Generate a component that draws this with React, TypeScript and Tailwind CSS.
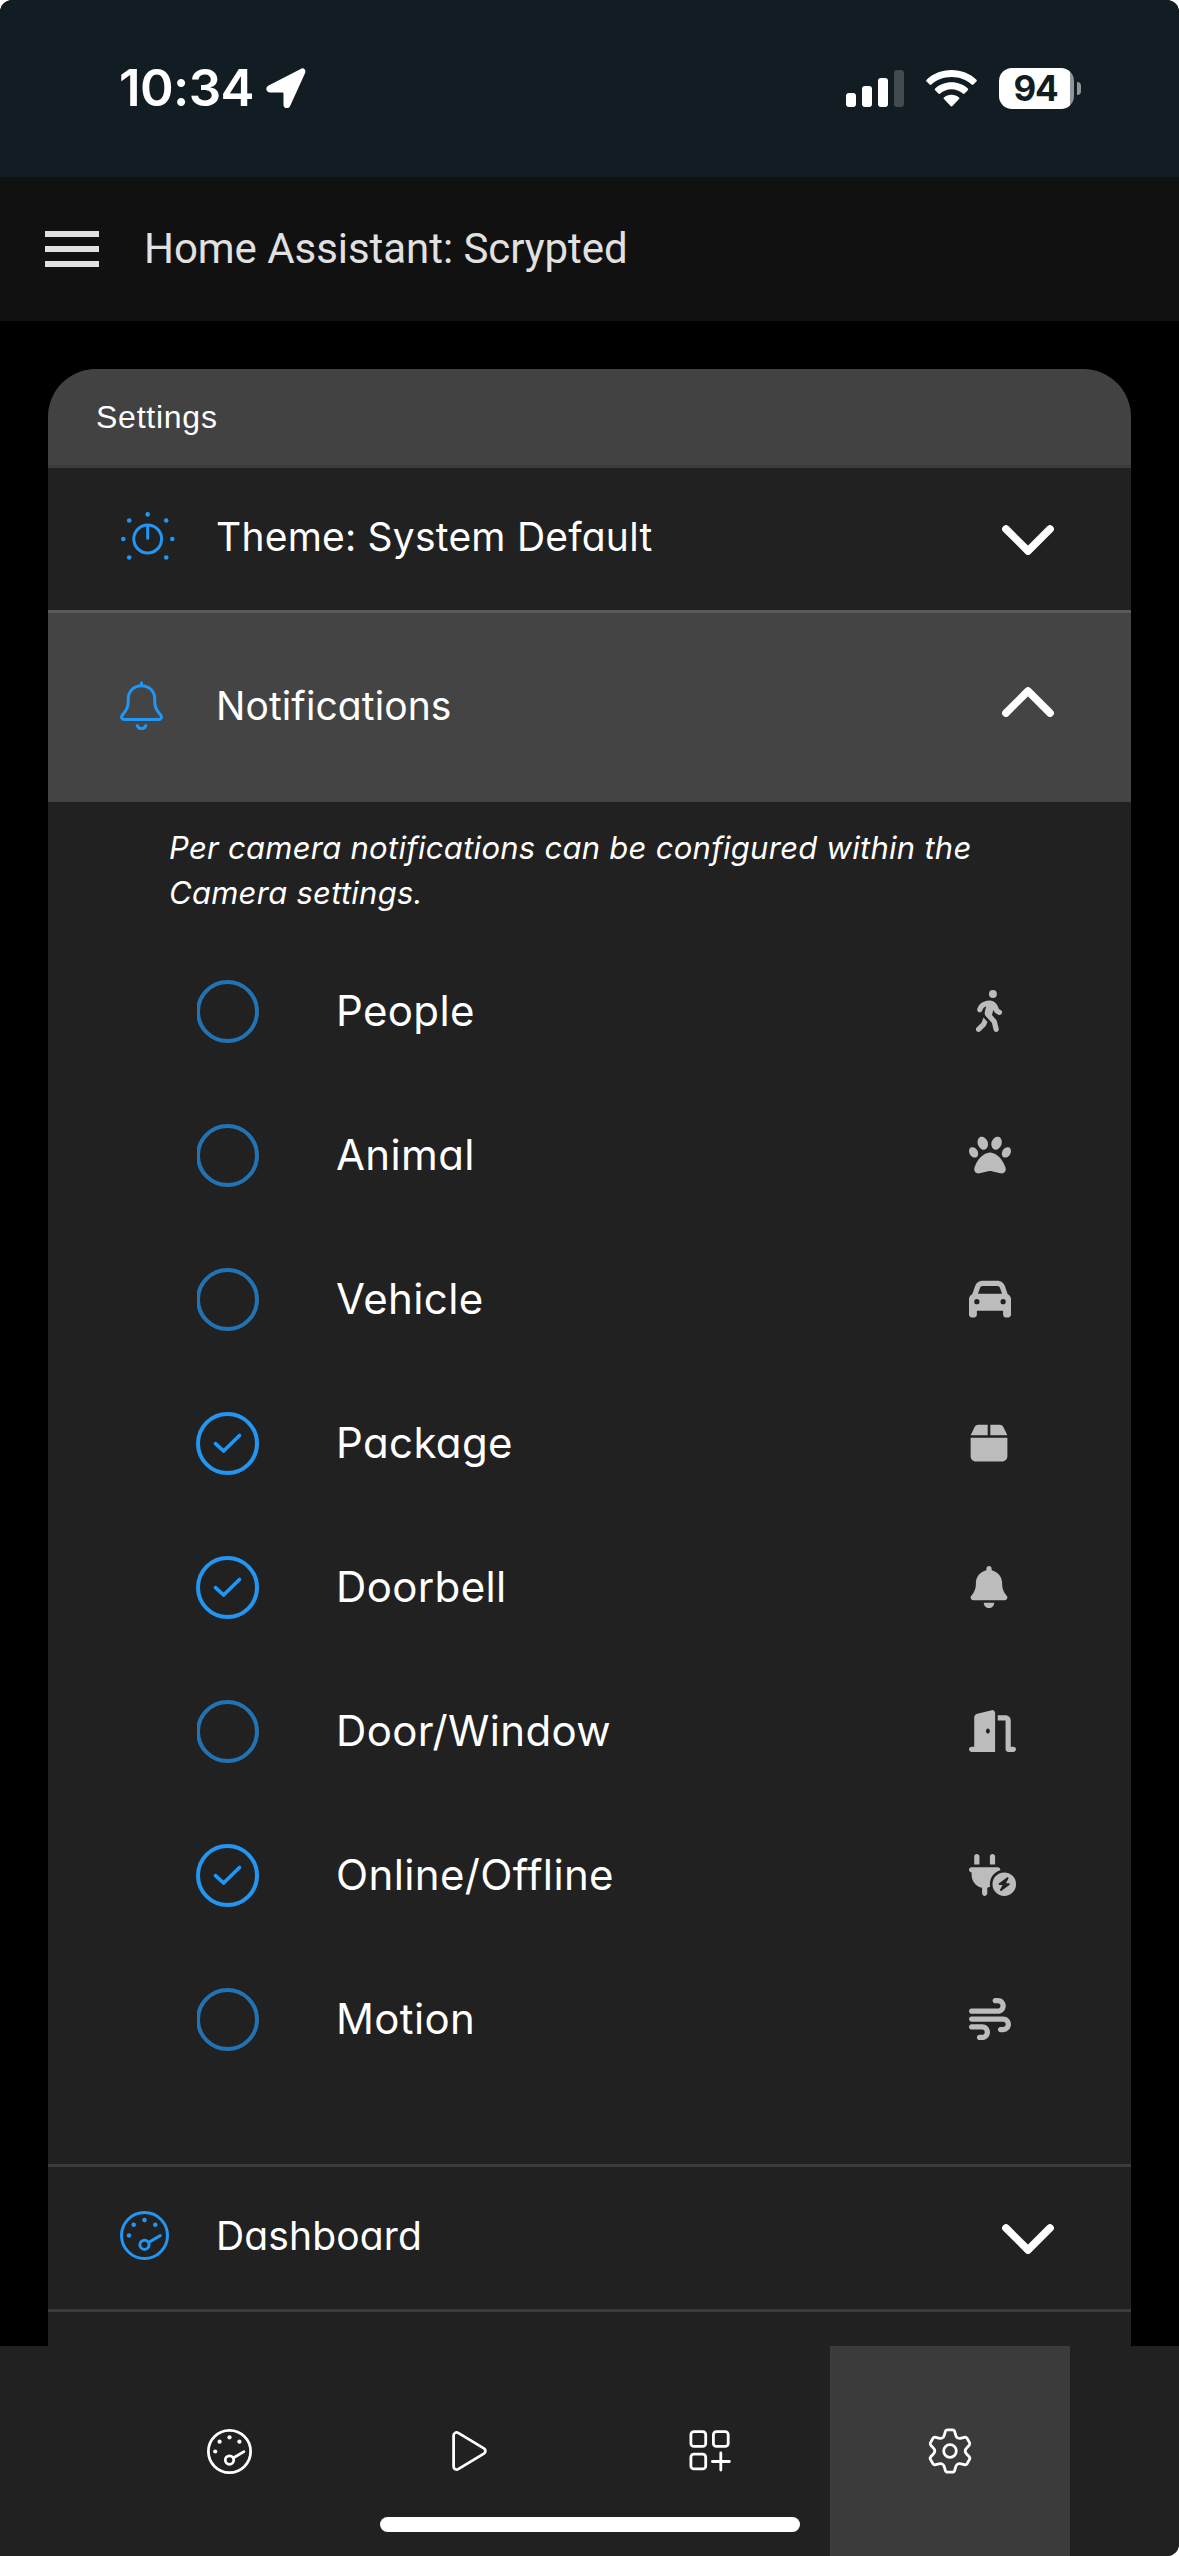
import type { ReactNode } from "react";
import type { IconType } from "react-icons";
import {
  FaBell,
  FaBox,
  FaCar,
  FaDoorOpen,
  FaPaw,
  FaPersonWalking,
  FaPlugCircleBolt,
  FaWind,
} from "react-icons/fa6";

type Option = { label: string; checked: boolean; icon: IconType; iconClass: string };

const options: Option[] = [
  { label: "People", checked: false, icon: FaPersonWalking, iconClass: "mr-[2px]" },
  { label: "Animal", checked: false, icon: FaPaw, iconClass: "" },
  { label: "Vehicle", checked: false, icon: FaCar, iconClass: "" },
  { label: "Package", checked: true, icon: FaBox, iconClass: "mr-[2px]" },
  { label: "Doorbell", checked: true, icon: FaBell, iconClass: "mr-[2px]" },
  { label: "Door/Window", checked: false, icon: FaDoorOpen, iconClass: "ml-[5px] w-[47px]" },
  { label: "Online/Offline", checked: true, icon: FaPlugCircleBolt, iconClass: "ml-[5px] w-[47px]" },
  { label: "Motion", checked: false, icon: FaWind, iconClass: "" },
];

function StatusBar() {
  return (
    <div className="flex h-[177px] shrink-0 items-start justify-between rounded-t-[12px] bg-[#111d23] pt-[58px] pr-[98px] pl-[119px] text-white">
      <div className="flex h-[60px] items-center">
        <span className="text-[51px] leading-[60px] font-semibold tracking-[-0.6px]">10:34</span>
        <svg className="ml-[12px] h-[40px] w-[40px]" viewBox="0 0 40 40" fill="currentColor">
          <path d="M35.2.7 2.6 17.6C-.9 19.4-.1 24.4 3.8 24.4H16.2c.9 0 1.3.4 1.3 1.3v11c0 4.2 5 4.8 6.6 1.3L39 5.2C40.3 2.100 38-.6 35.200.7Z" />
        </svg>
      </div>
      <div className="flex h-[60px] items-center">
        <div className="flex h-[37px] items-end gap-[6px]">
          <span className="h-[14px] w-[10px] rounded-[3px] bg-white" />
          <span className="h-[21px] w-[10px] rounded-[3px] bg-white" />
          <span className="h-[29px] w-[10px] rounded-[3px] bg-white" />
          <span className="h-[37px] w-[10px] rounded-[3px] bg-[#414b50]" />
        </div>
        <svg className="ml-[22px] h-[37px] w-[51px]" viewBox="0 0 51 37" fill="currentColor">
          <path d="M25.500 0C15.800 0 7 3.600.6 9.700c-.6.600-.6 1.300 0 1.900l3 3c.600.600 1.200.600 1.800 0C10.700 9.700 17.700 7 25.500 7s14.800 2.700 20.100 7.600c.6.600 1.200.600 1.800 0l3-3c.6-.6.6-1.300 0-1.900C44 3.600 35.200 0 25.500 0Z" />
          <path d="M25.500 12.300c-6.300 0-12 2.300-16.300 6.200-.6.600-.6 1.200 0 1.800l3.200 3.200c.6.600 1.200.600 1.800 0 3-2.600 6.900-4.200 11.300-4.200s8.300 1.600 11.300 4.200c.6.600 1.200.6 1.800 0l3.200-3.200c.6-.6.6-1.200 0-1.800-4.300-3.900-10-6.200-16.300-6.200Z" />
          <path d="M25.500 24.700c-2.900 0-5.500 1-7.500 2.700-.6.500-.6 1.200 0 1.700l6.600 7c.6.600 1.200.6 1.800 0l6.600-7c.6-.5.600-1.200 0-1.700-2-1.700-4.600-2.700-7.500-2.700Z" />
        </svg>
        <div className="ml-[22px] flex h-[41px] w-[75px] items-center justify-center rounded-[13px] bg-[linear-gradient(to_right,white_71px,#8f9598_71px)] pr-[2px]">
          <span className="text-[35px] leading-[41px] font-bold tracking-[-1.2px] text-[#111d23]">94</span>
        </div>
        <span className="ml-[3px] h-[13px] w-[4px] rounded-r-full bg-[#8f9598]" />
      </div>
    </div>
  );
}

function Chevron({ up = false }: { up?: boolean }) {
  return (
    <svg
      className={up ? "h-[30px] w-[52px] rotate-180" : "h-[30px] w-[52px]"}
      viewBox="0 0 52 30"
      fill="none"
      stroke="currentColor"
      strokeWidth="7.6"
      strokeLinecap="round"
      strokeLinejoin="round"
    >
      <path d="M4 4 26 26 48 4" />
    </svg>
  );
}

function DialIcon() {
  return (
    <svg className="ml-px h-[54px] w-[54px]" viewBox="0 0 54 54" fill="none">
      <circle cx="26.700" cy="27" r="13.900" stroke="currentColor" strokeWidth="3" />
      <path d="M26.700 14v12.300" stroke="currentColor" strokeWidth="3" strokeLinecap="round" />
      <g fill="currentColor">
        <circle cx="26.700" cy="2.400" r="2.300" />
        <circle cx="8.200" cy="8.500" r="2.300" />
        <circle cx="45.200" cy="8.500" r="2.300" />
        <circle cx="2.300" cy="27" r="2.300" />
        <circle cx="51.300" cy="27" r="2.300" />
        <circle cx="8.200" cy="45.500" r="2.300" />
        <circle cx="45.200" cy="45.500" r="2.300" />
      </g>
    </svg>
  );
}

function BellIcon() {
  return (
    <svg
      className="h-[49px] w-[43px]"
      viewBox="0 0 43 49"
      fill="none"
      stroke="currentColor"
      strokeWidth="3"
      strokeLinecap="round"
      strokeLinejoin="round"
    >
      <path d="M21.500 1.700v3" />
      <path d="M21.500 4.700c-8.300 0-13.300 6.200-13.300 13.600v3.500c0 5-2.200 8.200-5.600 11.900-2 2.200-.8 4.800 1.600 4.800h34.600c2.400 0 3.600-2.600 1.600-4.800-3.400-3.700-5.600-6.900-5.600-11.900v-3.500c0-7.400-5-13.600-13.300-13.600Z" />
      <path d="M17.200 44.600c1.500 3.900 7.100 3.900 8.600 0" />
    </svg>
  );
}

function GaugeIcon({ className }: { className: string }) {
  return (
    <svg className={className} viewBox="-24.500 -24.500 49 49" fill="none" stroke="currentColor" strokeWidth="3" strokeLinecap="round">
      <circle r="23" />
      <circle cy="9.300" r="4.600" />
      <path d="M4.500 6.800 15.700.1" />
      <g fill="currentColor" stroke="none">
        <circle cx="-15.500" r="2.300" />
        <circle cx="-10.800" cy="-10.700" r="2.300" />
        <circle cy="-15.400" r="2.300" />
        <circle cx="10.800" cy="-10.700" r="2.300" />
      </g>
    </svg>
  );
}

function PlayIcon() {
  return (
    <svg className="h-[40px] w-[35px]" viewBox="0 0 35 40" fill="none" stroke="currentColor" strokeWidth="2.800" strokeLinejoin="round">
      <path d="M1.600 4.600v30.800c0 2.500 2.500 3.900 4.600 2.700l25.700-15.500c2-1.200 2-4 0-5.200L6.200 1.900C4.100.7 1.600 2.100 1.600 4.600Z" />
    </svg>
  );
}

function WidgetsIcon() {
  return (
    <svg className="h-[42px] w-[42px]" viewBox="0 0 42 42" fill="none" stroke="currentColor" strokeWidth="2.800" strokeLinecap="round">
      <rect x="1.900" y="1.600" width="14.800" height="14.800" rx="3" />
      <rect x="24.400" y="1.600" width="14.800" height="14.800" rx="3" />
      <rect x="1.900" y="24.100" width="14.800" height="14.800" rx="3" />
      <path d="M23.400 31.500h17M31.800 23v17" />
    </svg>
  );
}

function rotate([x, y]: [number, number], degrees: number) {
  const a = (degrees * Math.PI) / 180;
  const c = Math.cos(a);
  const s = Math.sin(a);
  return `${(x * c - y * s).toFixed(2)} ${(x * s + y * c).toFixed(2)}`;
}

// One tooth of the cog, repeated every 60 degrees.
const gearPath =
  [0, 60, 120, 180, 240, 300]
    .map((d, i) => {
      const p = (x: number, y: number) => rotate([x, y], d);
      const start = i === 0 ? `M${p(-5.6, -16.2)}` : "";
      const next = rotate([-5.6, -16.2], d + 60);
      const control = rotate([-6.4, -13.2], d + 60);
      return `${start}L${p(-4.7, -19.3)}Q${p(-4.2, -21.1)} ${p(-2.5, -21.1)}L${p(2.5, -21.1)}Q${p(4.2, -21.1)} ${p(4.7, -19.3)}L${p(5.6, -16.2)}C${p(6.4, -13.2)} ${control} ${next}`;
    })
    .join("") + "Z";

function GearIcon() {
  return (
    <svg className="h-[46px] w-[46px]" viewBox="-23 -23 46 46" fill="none" stroke="currentColor" strokeWidth="2.800" strokeLinejoin="round">
      <path d={gearPath} />
      <circle r="6.300" />
    </svg>
  );
}

function Radio({ checked }: { checked: boolean }) {
  return checked ? (
    <svg className="h-[64px] w-[63px] text-[#2196f3]" viewBox="0 0 63 64" fill="none" stroke="currentColor">
      <circle cx="31.500" cy="32.500" r="29.500" strokeWidth="4" />
      <path d="M19.500 32.600 27.600 40 43.500 24.500" strokeWidth="3.700" strokeLinecap="round" strokeLinejoin="round" />
    </svg>
  ) : (
    <svg className="ml-px h-[64px] w-[62px] text-[#2273b4]" viewBox="1 0 62 64" fill="none" stroke="currentColor">
      <circle cx="31.500" cy="32.500" r="29.500" strokeWidth="4" />
    </svg>
  );
}

function PanelRow({ icon, label, spacing }: { icon: ReactNode; label: string; spacing: string }) {
  return (
    <div className="flex h-[142px] items-center pr-[77px] pl-[72px]">
      <span className="flex w-[96px] text-[#2196f3]">{icon}</span>
      <span className={`flex-1 pb-[4px] text-[39px] leading-[48px] ${spacing}`}>{label}</span>
      <span className="pt-[2px]">
        <Chevron />
      </span>
    </div>
  );
}

function OptionRow({ label, checked, icon: Icon, iconClass }: Option) {
  return (
    <div className="flex h-[144px] items-center pr-[120px] pl-[148px]">
      <span className="w-[140px]">
        <Radio checked={checked} />
      </span>
      <span className="flex-1 text-[42px] leading-[50px] tracking-[0.36px]">{label}</span>
      <span className="flex h-[42px] w-[42px] justify-center text-[42px] text-[#bcbcbc]">
        <Icon className={`h-[42px] shrink-0 ${iconClass}`} />
      </span>
    </div>
  );
}

function BottomNav() {
  return (
    <nav className="relative flex h-[210px] shrink-0 justify-center rounded-br-[12px] bg-[#212121]">
      <div className="flex w-[240px] items-center justify-center">
        <GaugeIcon className="h-[45px] w-[45px]" />
      </div>
      <div className="flex w-[240px] items-center justify-center">
        <PlayIcon />
      </div>
      <div className="flex w-[240px] items-center justify-center">
        <WidgetsIcon />
      </div>
      <div className="flex w-[240px] items-center justify-center bg-[#3b3b3b]">
        <GearIcon />
      </div>
      <span className="absolute bottom-[24px] left-[380px] h-[15px] w-[420px] rounded-full bg-white" />
    </nav>
  );
}

export default function App() {
  return (
    <div className="h-[2556px] w-[1179px] bg-white">
      <div className="flex h-full flex-col overflow-hidden rounded-t-[12px] rounded-br-[12px] bg-black font-['Inter',sans-serif] text-white [font-feature-settings:'cv11']">
        <StatusBar />
        <header className="flex h-[144px] shrink-0 items-center bg-[#111111] pl-[45px] text-[#e1e1e1]">
          <div className="flex w-[54px] flex-col gap-[9px]">
            <span className="h-[6px] bg-current" />
            <span className="h-[6px] bg-current" />
            <span className="h-[6px] bg-current" />
          </div>
          <h1 className="ml-[45px] font-['Roboto',sans-serif] text-[42px] leading-[50px] tracking-[-0.05px]">
            Home Assistant: Scrypted
          </h1>
        </header>
        <main className="min-h-0 flex-1 overflow-hidden px-[48px] pt-[48px]">
          <section className="h-[2200px] overflow-hidden rounded-t-[48px] bg-[#212121]">
            <h2 className="flex h-[96px] items-center bg-[#424242] pl-[48px] font-['Liberation_Sans',sans-serif] text-[32px] tracking-[0.75px]">
              Settings
            </h2>
            <div className="h-[3px] bg-[#3b3b3b]" />
            <PanelRow icon={<DialIcon />} label="Theme: System Default" spacing="tracking-[0.22px]" />
            <div className="h-[3px] bg-[#5a5a5a]" />
            <div className="flex h-[189px] items-center bg-[#444444] pr-[77px] pl-[72px]">
              <span className="flex w-[96px] pb-[4px] text-[#2196f3]">
                <BellIcon />
              </span>
              <span className="flex-1 pb-[4px] text-[39px] leading-[48px] tracking-[0.1px]">Notifications</span>
              <span className="pb-[11px]">
                <Chevron up />
              </span>
            </div>
            <p className="mb-[24px] pt-[23px] pl-[121px] text-[31px] leading-[45px] tracking-[0.27px] italic">
              Per camera notifications can be configured within the
              <br />
              Camera settings.
            </p>
            <div className="pb-[73px]">
              {options.map((option) => (
                <OptionRow key={option.label} {...option} />
              ))}
            </div>
            <div className="h-[3px] bg-[#3b3b3b]" />
            <PanelRow
              icon={<GaugeIcon className="mb-[5px] h-[49px] w-[49px]" />}
              label="Dashboard"
              spacing="tracking-[0.15px]"
            />
            <div className="h-[3px] bg-[#3b3b3b]" />
          </section>
        </main>
        <BottomNav />
      </div>
    </div>
  );
}
